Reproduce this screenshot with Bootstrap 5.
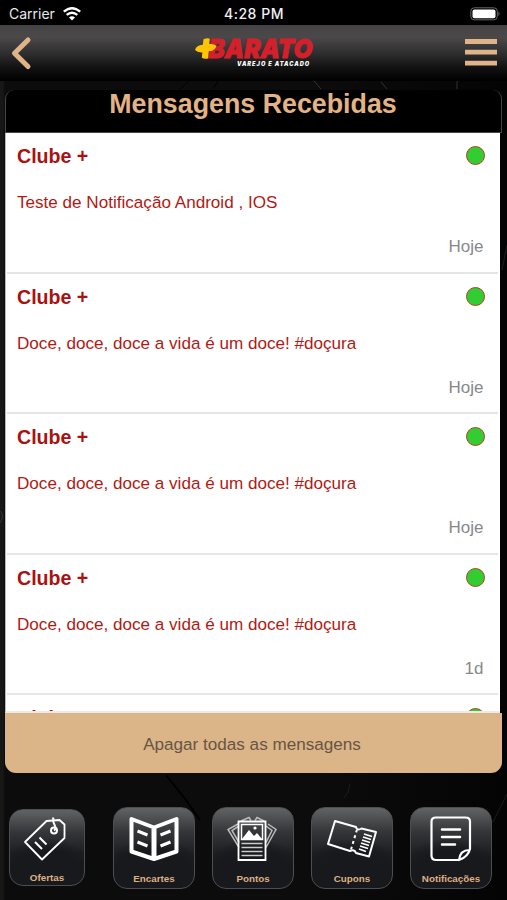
<!DOCTYPE html>
<html lang="pt-BR">
<head>
<meta charset="utf-8">
<meta name="viewport" content="width=device-width, initial-scale=1">
<title>Mensagens Recebidas</title>
<link href="https://cdn.jsdelivr.net/npm/bootstrap@5.3.0/dist/css/bootstrap.min.css" rel="stylesheet">
<style>
:root{--sand:#dbb488}
body{height:900px;background:#0c0c0c;font-family:"Liberation Sans",Arial,sans-serif;line-height:1}
svg{display:block;overflow:visible}
.screen{background:linear-gradient(90deg,#171716 0 3px,#0c0c0c 5px,#0c0c0c 60%,#040404)}
.backdrop{z-index:0}
.screen>:not(.backdrop){position:relative;z-index:1}
.status{height:25px;padding:2px 7px 0 9px;background:#000;color:#e8e8e8;font-family:Inter,sans-serif;font-size:14px}
.status .side{width:90px}
.status .clock{font-weight:500;letter-spacing:.55px;color:#f2f2f2;margin-right:1px}
.topbar{height:56px;background:linear-gradient(#454344,#4a4849 22%,#302f30 50%,#121212 76%,#000);padding:0 10px 0 11px}
.brand-logo{margin-left:10px}
.panel{width:497px;height:683px;margin:9px 0 0 5px}
.panel-title{height:43px;background:#000;color:#e3b285;font-size:26.8px;font-weight:700;border:1px solid #444;border-width:0 1px 1px;border-radius:9px 9px 0 0;line-height:28px;padding-right:1px}
.messages{height:580px;background:#fff;margin-right:2px;border-left:1px solid #bbb;border-bottom:2px solid #eee9e4}
.message{height:140.5px;flex:none;padding:12px 15.5px 0 11px;background:none;border:0;color:#b11a14}
.message::after{content:"";display:block;height:2px;background:#e6e6e6;margin:auto -13px 0 -10px}
.message h2{font-size:19.6px;font-weight:700;line-height:22px;margin:0;color:#aa1111}
.message p{font-size:17.1px;line-height:20px;margin:26px 0 0}
.message time{font-size:17px;line-height:20px;color:#888;margin-top:24px;padding-right:1px}
.dot{width:19px;height:19px;background:#32cd32;border:1.5px solid #a9461c;margin:1px 0 0}
.clear-all{height:60px;background:var(--sand);color:#675544;font-size:17.1px;border-radius:0 0 11px 11px;border:0;padding:3px 3px 0 0}
.dock{height:127px;padding:22px 15px 0 9px}
.tile{width:82px;height:82px;border:1.5px solid #4c4e50;border-radius:14px;background:radial-gradient(ellipse 75% 62% at 50% 100%,#17191d 75%,transparent 100%),linear-gradient(#626365,#343538 30%,#1d1e21 58%,#17191d);color:#dfb084;font-size:9.8px;font-weight:700;padding-bottom:4px;text-decoration:none}
.tile svg{margin-top:1px}
.tile-small{width:76px;height:77px;padding-bottom:2px}
</style>
<script src="https://cdn.jsdelivr.net/npm/bootstrap@5.3.0/dist/js/bootstrap.bundle.min.js"></script>
</head>
<body class="m-0 overflow-hidden">
<div class="screen vh-100 position-relative overflow-hidden">
  <svg class="backdrop position-absolute top-0 start-0" width="507" height="900" fill="none" stroke="#1d1d1d">
    <path d="M314 81l7 8M381 82l6 7M457 81v8" stroke="#333"/><path d="M180 89l9-8M213 89l5-8" stroke="#000"/>
    <path d="M166 775l20 25 14 20" stroke="#000" stroke-width="2"/><path d="M350 784q-1 9-6 14M507 245l-5 25M493 822l14-28"/><path d="M0 511q5 4 0 12" stroke="#333"/>
  </svg>
  <header class="status d-flex align-items-center justify-content-between">
    <div class="side d-flex align-items-center"><span class="me-2">Carrier</span>
      <svg width="18" height="14" viewBox="0 0 18 14" fill="none" stroke="#fff" stroke-width="2.4"><path d="M.8 4.700Q9-2.400 17.200 4.700M3.700 7.900Q9 3.400 14.300 7.900"/><path d="M6 10.400Q9 8 12 10.400L9 13.400Z" fill="#fff" stroke="none"/></svg>
    </div>
    <span class="clock">4:28 PM</span>
    <div class="side d-flex justify-content-end"><svg width="30" height="14"><rect x=".8" y=".8" width="26.500" height="12" rx="3.500" fill="none" stroke="#686868"/><rect x="2.500" y="2.500" width="23" height="8.800" rx="2" fill="#fff"/><path d="M28.500 4.500v4.500q2-2.200 0-4.500" fill="#777"/></svg></div>
  </header>
  <nav class="topbar navbar flex-nowrap justify-content-between">
    <a href="#" aria-label="Voltar"><svg width="22" height="34" fill="none" stroke="#dfb489" stroke-width="5" stroke-linecap="round" stroke-linejoin="round"><path d="M17 4L3.500 17.200 17 30.500"/></svg></a>
    <svg class="brand-logo" width="120" height="34" viewBox="0 0 120 34">
      <g font-family="Inter,sans-serif" font-weight="900" font-style="italic"><text x="14.500" y="22" font-size="26" textLength="104" lengthAdjust="spacingAndGlyphs" fill="#d5202b" stroke="#d5202b" stroke-width=".8">BARATO</text><text x="43" y="29.600" font-size="5.600" textLength="72" lengthAdjust="spacing" fill="#fff">VAREJO E ATACADO</text></g>
      <path d="M9.500 3.200q4-1.400 6.300-.5l-.6 5.300q4.800-.4 7.300 1.900-1.500 5-7.700 5.400l-.6 7.200q-4 .9-6.400-.7l.6-5.400q-4.800.4-7.400-2.400 1.400-5 7.800-5.200z" fill="#fdc505"/>
    </svg>
    <button class="btn p-0 border-0" aria-label="Menu"><svg width="32" height="30" stroke="#dfb489" stroke-width="4.800"><path d="M0 3.500h32M0 14.200h32M0 25.200h32"/></svg></button>
  </nav>
  <main class="panel d-flex flex-column">
    <h1 class="panel-title m-0 text-center">Mensagens Recebidas</h1>
    <div class="messages list-group list-group-flush rounded-0 overflow-hidden">
      <article class="message list-group-item d-flex flex-column"><div class="d-flex justify-content-between"><h2>Clube +</h2><span class="dot rounded-circle"></span></div><p>Teste de Notificação Android , IOS</p><time class="text-end">Hoje</time></article>
      <article class="message list-group-item d-flex flex-column"><div class="d-flex justify-content-between"><h2>Clube +</h2><span class="dot rounded-circle"></span></div><p>Doce, doce, doce a vida é um doce! #doçura</p><time class="text-end">Hoje</time></article>
      <article class="message list-group-item d-flex flex-column"><div class="d-flex justify-content-between"><h2>Clube +</h2><span class="dot rounded-circle"></span></div><p>Doce, doce, doce a vida é um doce! #doçura</p><time class="text-end">Hoje</time></article>
      <article class="message list-group-item d-flex flex-column"><div class="d-flex justify-content-between"><h2>Clube +</h2><span class="dot rounded-circle"></span></div><p>Doce, doce, doce a vida é um doce! #doçura</p><time class="text-end">1d</time></article>
      <article class="message list-group-item d-flex flex-column"><div class="d-flex justify-content-between"><h2>Clube +</h2><span class="dot rounded-circle"></span></div></article>
    </div>
    <button class="clear-all">Apagar todas as mensagens</button>
  </main>
  <footer class="dock d-flex align-items-center justify-content-between">
    <a href="#" class="tile tile-small d-flex flex-column align-items-center justify-content-between me-2"><svg width="76" height="56" viewBox="0 0 76 56" fill="none" stroke="#fff" stroke-width="1.800" stroke-linejoin="round"><path d="M16 31L37.500 10l13-1 5 4.500v13.500L33 48.500Z"/><circle cx="45" cy="19.500" r="3" stroke-width="2"/><path d="M45 19.500c5-3-3-7-.5-13" stroke-width="2"/><path d="M26 31l7 7M30.500 26.500l7 7" stroke-width="2"/></svg><span>Ofertas</span></a>
    <div class="d-flex" style="gap:17px">
    <a href="#" class="tile d-flex flex-column align-items-center justify-content-between"><svg width="80" height="58" viewBox="0 0 80 58" fill="none" stroke="#fff" stroke-width="4" stroke-linejoin="round"><path d="M17.500 10L40 18.500 62.500 10v32.500L40 50 17.500 42.500Z"/><path d="M40 19.500v30" stroke-width="5"/><path d="M23.500 22l10 4M23.500 33l10 4M56.500 22l-10 4M56.500 33l-10 4" stroke-width="3"/></svg><span>Encartes</span></a>
    <a href="#" class="tile d-flex flex-column align-items-center justify-content-between"><svg width="80" height="58" viewBox="0 0 80 58" fill="none" stroke="#fff" stroke-width="1.500"><path d="M25 15L15 20.500l11 18M26 17l-7 4.500 7 12M28 12l8-3.500 2 3M55 15l8 5.500-10 18M53 17l6 4.500-6 12M51 12l-7-3.500-2 3" stroke="#bbb"/><path d="M25.500 12.500h27v38.500h-27Z" stroke-width="1.800"/><path d="M28.500 15.500h21v15h-21Z"/><path d="M29 30l7-9 5 6 3-3 5 6Z" fill="#fff" stroke="none"/><circle cx="42" cy="19" r="1.600" fill="#fff" stroke="none"/><path d="M28.500 34.500h21M28.500 38.500h21M28.500 42.500h21M28.500 46.500h21" stroke="#ccc"/></svg><span>Pontos</span></a>
    <a href="#" class="tile d-flex flex-column align-items-center justify-content-between"><svg width="80" height="58" viewBox="0 0 80 58" fill="none" stroke="#fff" stroke-width="2" stroke-linejoin="round"><path d="M23 12l21 6q1 4 5.500 1.500L64 23l-7 24.500-13-3.500q-1.500-4-6-2L16 35Z"/><path d="M45 20.500l-6 20" stroke-dasharray="3 3"/><path d="M52 25l8 2.500M51 28l8 2.500M50 31l8 2.500M49 34l8 2.500M48 37l8 2.500M47 40l7 2.500" stroke-width="1.600"/></svg><span>Cupons</span></a>
    <a href="#" class="tile d-flex flex-column align-items-center justify-content-between"><svg width="80" height="58" viewBox="0 0 80 58" fill="none" stroke="#fff" stroke-width="2.200" stroke-linejoin="round" stroke-linecap="round"><path d="M48 51H25q-4.500 0-4.500-4.500v-34Q20.500 8.500 25 8.500h29.500q4.500 0 4.500 4v27.500q-2 8-11 11 1-10 10.500-10"/><path d="M31 20.500h18M31 28h18M31 35.500h13" stroke-width="2.500"/></svg><span>Notificações</span></a>
    </div>
  </footer>
</div>
</body>
</html>
